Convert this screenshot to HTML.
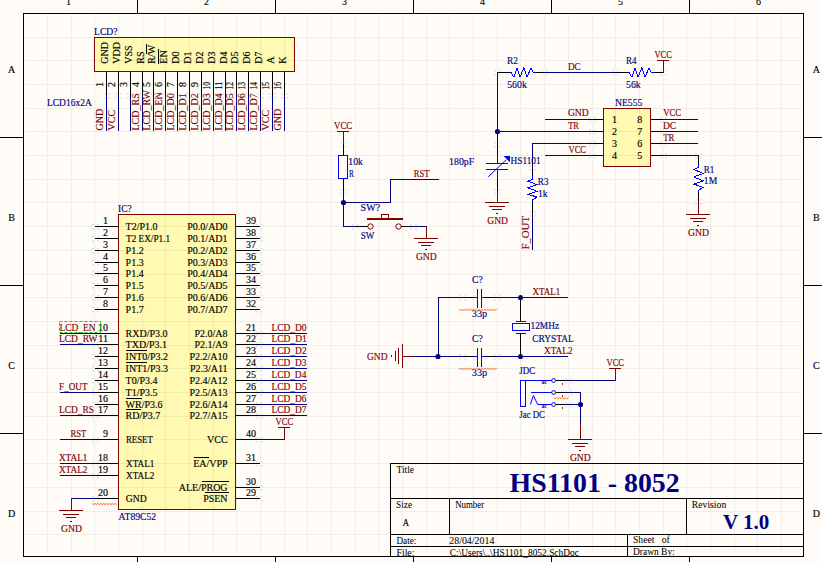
<!DOCTYPE html><html><head><meta charset="utf-8"><style>html,body{margin:0;padding:0;background:#FFFCF8;overflow:hidden}svg{display:block}text{font-family:'Liberation Serif', serif}</style></head><body>
<svg width="822" height="562" viewBox="0 0 822 562">
<rect width="822" height="562" fill="#FFFCF8"/>
<rect x="23.5" y="13.5" width="780" height="543" fill="none" stroke="#000000" stroke-width="1"/>
<rect x="137" y="0" width="1" height="14" fill="#000000"/>
<rect x="137" y="556" width="1" height="7" fill="#000000"/>
<rect x="275" y="0" width="1" height="14" fill="#000000"/>
<rect x="275" y="556" width="1" height="7" fill="#000000"/>
<rect x="413" y="0" width="1" height="14" fill="#000000"/>
<rect x="413" y="556" width="1" height="7" fill="#000000"/>
<rect x="551" y="0" width="1" height="14" fill="#000000"/>
<rect x="551" y="556" width="1" height="7" fill="#000000"/>
<rect x="689" y="0" width="1" height="14" fill="#000000"/>
<rect x="689" y="556" width="1" height="7" fill="#000000"/>
<rect x="0" y="137" width="24" height="1" fill="#000000"/>
<rect x="803" y="137" width="20" height="1" fill="#000000"/>
<rect x="0" y="285" width="24" height="1" fill="#000000"/>
<rect x="803" y="285" width="20" height="1" fill="#000000"/>
<rect x="0" y="433" width="24" height="1" fill="#000000"/>
<rect x="803" y="433" width="20" height="1" fill="#000000"/>
<text x="68.50" y="4.9" fill="#000000" stroke="#000000" stroke-width="0.15" font-size="10" text-anchor="middle">1</text>
<text x="206.50" y="4.9" fill="#000000" stroke="#000000" stroke-width="0.15" font-size="10" text-anchor="middle">2</text>
<text x="344.50" y="4.9" fill="#000000" stroke="#000000" stroke-width="0.15" font-size="10" text-anchor="middle">3</text>
<text x="482.50" y="4.9" fill="#000000" stroke="#000000" stroke-width="0.15" font-size="10" text-anchor="middle">4</text>
<text x="620.50" y="4.9" fill="#000000" stroke="#000000" stroke-width="0.15" font-size="10" text-anchor="middle">5</text>
<text x="758.50" y="4.9" fill="#000000" stroke="#000000" stroke-width="0.15" font-size="10" text-anchor="middle">6</text>
<text x="11.50" y="72.9" fill="#000000" stroke="#000000" stroke-width="0.15" font-size="10" text-anchor="middle">A</text>
<text x="816.40" y="72.9" fill="#000000" stroke="#000000" stroke-width="0.15" font-size="10" text-anchor="middle">A</text>
<text x="11.50" y="220.87" fill="#000000" stroke="#000000" stroke-width="0.15" font-size="10" text-anchor="middle">B</text>
<text x="816.40" y="220.87" fill="#000000" stroke="#000000" stroke-width="0.15" font-size="10" text-anchor="middle">B</text>
<text x="11.50" y="368.84000000000003" fill="#000000" stroke="#000000" stroke-width="0.15" font-size="10" text-anchor="middle">C</text>
<text x="816.40" y="368.84000000000003" fill="#000000" stroke="#000000" stroke-width="0.15" font-size="10" text-anchor="middle">C</text>
<text x="11.50" y="516.81" fill="#000000" stroke="#000000" stroke-width="0.15" font-size="10" text-anchor="middle">D</text>
<text x="816.40" y="516.81" fill="#000000" stroke="#000000" stroke-width="0.15" font-size="10" text-anchor="middle">D</text>
<rect x="94.5" y="37.5" width="200" height="34" fill="#FFF9B2" stroke="#800000" stroke-width="1"/>
<text x="94.02" y="34.8" fill="#000080" stroke="#000080" stroke-width="0.15" font-size="10" textLength="23.57" lengthAdjust="spacingAndGlyphs">LCD?</text>
<text x="46.93" y="105.7" fill="#000080" stroke="#000080" stroke-width="0.15" font-size="10" textLength="44.84" lengthAdjust="spacingAndGlyphs">LCD16x2A</text>
<rect x="106" y="72" width="1" height="24" fill="#000000"/>
<rect x="106" y="96" width="1" height="35" fill="#000080"/>
<text transform="translate(107.9 63.7) rotate(-90)" fill="#000000" stroke="#000000" stroke-width="0.15" font-size="10">GND</text>
<text transform="translate(103.0 84.6) rotate(-90)" fill="#000000" stroke="#000000" stroke-width="0.15" font-size="10" text-anchor="middle">1</text>
<text transform="translate(103.0 130.5) rotate(-90)" fill="#800000" stroke="#800000" stroke-width="0.15" font-size="10">GND</text>
<rect x="118" y="72" width="1" height="24" fill="#000000"/>
<rect x="118" y="96" width="1" height="35" fill="#000080"/>
<text transform="translate(119.9 63.7) rotate(-90)" fill="#000000" stroke="#000000" stroke-width="0.15" font-size="10">VDD</text>
<text transform="translate(115.0 84.6) rotate(-90)" fill="#000000" stroke="#000000" stroke-width="0.15" font-size="10" text-anchor="middle">2</text>
<text transform="translate(115.0 130.5) rotate(-90)" fill="#800000" stroke="#800000" stroke-width="0.15" font-size="10">VCC</text>
<rect x="130" y="72" width="1" height="24" fill="#000000"/>
<rect x="130" y="96" width="1" height="35" fill="#000080"/>
<text transform="translate(131.9 63.7) rotate(-90)" fill="#000000" stroke="#000000" stroke-width="0.15" font-size="10">VSS</text>
<text transform="translate(127.0 84.6) rotate(-90)" fill="#000000" stroke="#000000" stroke-width="0.15" font-size="10" text-anchor="middle">3</text>
<rect x="142" y="72" width="1" height="24" fill="#000000"/>
<rect x="142" y="96" width="1" height="35" fill="#000080"/>
<text transform="translate(143.9 63.7) rotate(-90)" fill="#000000" stroke="#000000" stroke-width="0.15" font-size="10">RS</text>
<text transform="translate(139.0 84.6) rotate(-90)" fill="#000000" stroke="#000000" stroke-width="0.15" font-size="10" text-anchor="middle">4</text>
<text transform="translate(139.0 130.5) rotate(-90)" fill="#800000" stroke="#800000" stroke-width="0.15" font-size="10">LCD_RS</text>
<rect x="153" y="72" width="1" height="24" fill="#000000"/>
<rect x="153" y="96" width="1" height="35" fill="#000080"/>
<text transform="translate(154.9 63.7) rotate(-90)" fill="#000000" stroke="#000000" stroke-width="0.15" font-size="10">R/W</text>
<text transform="translate(150.0 84.6) rotate(-90)" fill="#000000" stroke="#000000" stroke-width="0.15" font-size="10" text-anchor="middle">5</text>
<text transform="translate(150.0 130.5) rotate(-90)" fill="#800000" stroke="#800000" stroke-width="0.15" font-size="10">LCD_RW</text>
<rect x="165" y="72" width="1" height="24" fill="#000000"/>
<rect x="165" y="96" width="1" height="35" fill="#000080"/>
<text transform="translate(166.9 63.7) rotate(-90)" fill="#000000" stroke="#000000" stroke-width="0.15" font-size="10">EN</text>
<text transform="translate(162.0 84.6) rotate(-90)" fill="#000000" stroke="#000000" stroke-width="0.15" font-size="10" text-anchor="middle">6</text>
<text transform="translate(162.0 130.5) rotate(-90)" fill="#800000" stroke="#800000" stroke-width="0.15" font-size="10">LCD_EN</text>
<rect x="177" y="72" width="1" height="24" fill="#000000"/>
<rect x="177" y="96" width="1" height="35" fill="#000080"/>
<text transform="translate(178.9 63.7) rotate(-90)" fill="#000000" stroke="#000000" stroke-width="0.15" font-size="10">D0</text>
<text transform="translate(174.0 84.6) rotate(-90)" fill="#000000" stroke="#000000" stroke-width="0.15" font-size="10" text-anchor="middle">7</text>
<text transform="translate(174.0 130.5) rotate(-90)" fill="#800000" stroke="#800000" stroke-width="0.15" font-size="10">LCD_D0</text>
<rect x="189" y="72" width="1" height="24" fill="#000000"/>
<rect x="189" y="96" width="1" height="35" fill="#000080"/>
<text transform="translate(190.9 63.7) rotate(-90)" fill="#000000" stroke="#000000" stroke-width="0.15" font-size="10">D1</text>
<text transform="translate(186.0 84.6) rotate(-90)" fill="#000000" stroke="#000000" stroke-width="0.15" font-size="10" text-anchor="middle">8</text>
<text transform="translate(186.0 130.5) rotate(-90)" fill="#800000" stroke="#800000" stroke-width="0.15" font-size="10">LCD_D1</text>
<rect x="201" y="72" width="1" height="24" fill="#000000"/>
<rect x="201" y="96" width="1" height="35" fill="#000080"/>
<text transform="translate(202.9 63.7) rotate(-90)" fill="#000000" stroke="#000000" stroke-width="0.15" font-size="10">D2</text>
<text transform="translate(198.0 84.6) rotate(-90)" fill="#000000" stroke="#000000" stroke-width="0.15" font-size="10" text-anchor="middle">9</text>
<text transform="translate(198.0 130.5) rotate(-90)" fill="#800000" stroke="#800000" stroke-width="0.15" font-size="10">LCD_D2</text>
<rect x="213" y="72" width="1" height="24" fill="#000000"/>
<rect x="213" y="96" width="1" height="35" fill="#000080"/>
<text transform="translate(214.9 63.7) rotate(-90)" fill="#000000" stroke="#000000" stroke-width="0.15" font-size="10">D3</text>
<text transform="translate(210.0 85.7) rotate(-90)" fill="#000000" stroke="#000000" stroke-width="0.15" font-size="10" text-anchor="middle" textLength="7.6" lengthAdjust="spacingAndGlyphs">10</text>
<text transform="translate(210.0 130.5) rotate(-90)" fill="#800000" stroke="#800000" stroke-width="0.15" font-size="10">LCD_D3</text>
<rect x="225" y="72" width="1" height="24" fill="#000000"/>
<rect x="225" y="96" width="1" height="35" fill="#000080"/>
<text transform="translate(226.9 63.7) rotate(-90)" fill="#000000" stroke="#000000" stroke-width="0.15" font-size="10">D4</text>
<text transform="translate(222.0 85.7) rotate(-90)" fill="#000000" stroke="#000000" stroke-width="0.15" font-size="10" text-anchor="middle" textLength="7.6" lengthAdjust="spacingAndGlyphs">11</text>
<text transform="translate(222.0 130.5) rotate(-90)" fill="#800000" stroke="#800000" stroke-width="0.15" font-size="10">LCD_D4</text>
<rect x="236" y="72" width="1" height="24" fill="#000000"/>
<rect x="236" y="96" width="1" height="35" fill="#000080"/>
<text transform="translate(237.9 63.7) rotate(-90)" fill="#000000" stroke="#000000" stroke-width="0.15" font-size="10">D5</text>
<text transform="translate(233.0 85.7) rotate(-90)" fill="#000000" stroke="#000000" stroke-width="0.15" font-size="10" text-anchor="middle" textLength="7.6" lengthAdjust="spacingAndGlyphs">12</text>
<text transform="translate(233.0 130.5) rotate(-90)" fill="#800000" stroke="#800000" stroke-width="0.15" font-size="10">LCD_D5</text>
<rect x="248" y="72" width="1" height="24" fill="#000000"/>
<rect x="248" y="96" width="1" height="35" fill="#000080"/>
<text transform="translate(249.9 63.7) rotate(-90)" fill="#000000" stroke="#000000" stroke-width="0.15" font-size="10">D6</text>
<text transform="translate(245.0 85.7) rotate(-90)" fill="#000000" stroke="#000000" stroke-width="0.15" font-size="10" text-anchor="middle" textLength="7.6" lengthAdjust="spacingAndGlyphs">13</text>
<text transform="translate(245.0 130.5) rotate(-90)" fill="#800000" stroke="#800000" stroke-width="0.15" font-size="10">LCD_D6</text>
<rect x="260" y="72" width="1" height="24" fill="#000000"/>
<rect x="260" y="96" width="1" height="35" fill="#000080"/>
<text transform="translate(261.9 63.7) rotate(-90)" fill="#000000" stroke="#000000" stroke-width="0.15" font-size="10">D7</text>
<text transform="translate(257.0 85.7) rotate(-90)" fill="#000000" stroke="#000000" stroke-width="0.15" font-size="10" text-anchor="middle" textLength="7.6" lengthAdjust="spacingAndGlyphs">14</text>
<text transform="translate(257.0 130.5) rotate(-90)" fill="#800000" stroke="#800000" stroke-width="0.15" font-size="10">LCD_D7</text>
<rect x="272" y="72" width="1" height="24" fill="#000000"/>
<rect x="272" y="96" width="1" height="35" fill="#000080"/>
<text transform="translate(273.9 63.7) rotate(-90)" fill="#000000" stroke="#000000" stroke-width="0.15" font-size="10">A</text>
<text transform="translate(269.0 85.7) rotate(-90)" fill="#000000" stroke="#000000" stroke-width="0.15" font-size="10" text-anchor="middle" textLength="7.6" lengthAdjust="spacingAndGlyphs">15</text>
<text transform="translate(269.0 130.5) rotate(-90)" fill="#800000" stroke="#800000" stroke-width="0.15" font-size="10">VCC</text>
<rect x="284" y="72" width="1" height="24" fill="#000000"/>
<rect x="284" y="96" width="1" height="35" fill="#000080"/>
<text transform="translate(285.9 63.7) rotate(-90)" fill="#000000" stroke="#000000" stroke-width="0.15" font-size="10">K</text>
<text transform="translate(281.0 85.7) rotate(-90)" fill="#000000" stroke="#000000" stroke-width="0.15" font-size="10" text-anchor="middle" textLength="7.6" lengthAdjust="spacingAndGlyphs">16</text>
<text transform="translate(281.0 130.5) rotate(-90)" fill="#800000" stroke="#800000" stroke-width="0.15" font-size="10">GND</text>
<rect x="146" y="44" width="1" height="10" fill="#000000"/>
<rect x="158" y="49" width="1" height="15" fill="#000000"/>
<rect x="118.5" y="214.5" width="117" height="295" fill="#FFF9B2" stroke="#800000" stroke-width="1"/>
<text x="118.06" y="211.9" fill="#000080" stroke="#000080" stroke-width="0.15" font-size="10" textLength="13.73" lengthAdjust="spacingAndGlyphs">IC?</text>
<text x="118.61" y="519.8" fill="#000080" stroke="#000080" stroke-width="0.15" font-size="10" textLength="37.61" lengthAdjust="spacingAndGlyphs">AT89C52</text>
<rect x="95" y="226" width="24" height="1" fill="#000000"/>
<text x="125.60" y="229.7" fill="#000000" stroke="#000000" stroke-width="0.15" font-size="10">T2/P1.0</text>
<text x="108.00" y="223.7" fill="#000000" stroke="#000000" stroke-width="0.15" font-size="10" text-anchor="end">1</text>
<rect x="95" y="238" width="24" height="1" fill="#000000"/>
<text x="126.03" y="241.7" fill="#000000" stroke="#000000" stroke-width="0.15" font-size="10" textLength="44.02" lengthAdjust="spacingAndGlyphs">T2 EX/P1.1</text>
<text x="108.00" y="235.7" fill="#000000" stroke="#000000" stroke-width="0.15" font-size="10" text-anchor="end">2</text>
<rect x="95" y="250" width="24" height="1" fill="#000000"/>
<text x="125.60" y="253.7" fill="#000000" stroke="#000000" stroke-width="0.15" font-size="10">P1.2</text>
<text x="108.00" y="247.7" fill="#000000" stroke="#000000" stroke-width="0.15" font-size="10" text-anchor="end">3</text>
<rect x="95" y="262" width="24" height="1" fill="#000000"/>
<text x="125.60" y="265.7" fill="#000000" stroke="#000000" stroke-width="0.15" font-size="10">P1.3</text>
<text x="108.00" y="259.7" fill="#000000" stroke="#000000" stroke-width="0.15" font-size="10" text-anchor="end">4</text>
<rect x="95" y="273" width="24" height="1" fill="#000000"/>
<text x="125.60" y="276.7" fill="#000000" stroke="#000000" stroke-width="0.15" font-size="10">P1.4</text>
<text x="108.00" y="270.7" fill="#000000" stroke="#000000" stroke-width="0.15" font-size="10" text-anchor="end">5</text>
<rect x="95" y="285" width="24" height="1" fill="#000000"/>
<text x="125.60" y="288.7" fill="#000000" stroke="#000000" stroke-width="0.15" font-size="10">P1.5</text>
<text x="108.00" y="282.7" fill="#000000" stroke="#000000" stroke-width="0.15" font-size="10" text-anchor="end">6</text>
<rect x="95" y="297" width="24" height="1" fill="#000000"/>
<text x="125.60" y="300.7" fill="#000000" stroke="#000000" stroke-width="0.15" font-size="10">P1.6</text>
<text x="108.00" y="294.7" fill="#000000" stroke="#000000" stroke-width="0.15" font-size="10" text-anchor="end">7</text>
<rect x="95" y="309" width="24" height="1" fill="#000000"/>
<text x="125.60" y="312.7" fill="#000000" stroke="#000000" stroke-width="0.15" font-size="10">P1.7</text>
<text x="108.00" y="306.7" fill="#000000" stroke="#000000" stroke-width="0.15" font-size="10" text-anchor="end">8</text>
<rect x="95" y="333" width="24" height="1" fill="#000000"/>
<text x="125.60" y="336.7" fill="#000000" stroke="#000000" stroke-width="0.15" font-size="10">RXD/P3.0</text>
<text x="108.00" y="330.7" fill="#000000" stroke="#000000" stroke-width="0.15" font-size="10" text-anchor="end">10</text>
<rect x="95" y="344" width="24" height="1" fill="#000000"/>
<text x="125.60" y="347.7" fill="#000000" stroke="#000000" stroke-width="0.15" font-size="10">TXD/P3.1</text>
<text x="108.00" y="341.7" fill="#000000" stroke="#000000" stroke-width="0.15" font-size="10" text-anchor="end">11</text>
<rect x="95" y="356" width="24" height="1" fill="#000000"/>
<text x="125.60" y="359.7" fill="#000000" stroke="#000000" stroke-width="0.15" font-size="10">INT0/P3.2</text>
<text x="108.00" y="353.7" fill="#000000" stroke="#000000" stroke-width="0.15" font-size="10" text-anchor="end">12</text>
<rect x="95" y="368" width="24" height="1" fill="#000000"/>
<text x="125.60" y="371.7" fill="#000000" stroke="#000000" stroke-width="0.15" font-size="10">INT1/P3.3</text>
<text x="108.00" y="365.7" fill="#000000" stroke="#000000" stroke-width="0.15" font-size="10" text-anchor="end">13</text>
<rect x="95" y="380" width="24" height="1" fill="#000000"/>
<text x="125.60" y="383.7" fill="#000000" stroke="#000000" stroke-width="0.15" font-size="10">T0/P3.4</text>
<text x="108.00" y="377.7" fill="#000000" stroke="#000000" stroke-width="0.15" font-size="10" text-anchor="end">14</text>
<rect x="95" y="392" width="24" height="1" fill="#000000"/>
<text x="125.60" y="395.7" fill="#000000" stroke="#000000" stroke-width="0.15" font-size="10">T1/P3.5</text>
<text x="108.00" y="389.7" fill="#000000" stroke="#000000" stroke-width="0.15" font-size="10" text-anchor="end">15</text>
<rect x="95" y="404" width="24" height="1" fill="#000000"/>
<text x="125.60" y="407.7" fill="#000000" stroke="#000000" stroke-width="0.15" font-size="10">WR/P3.6</text>
<text x="108.00" y="401.7" fill="#000000" stroke="#000000" stroke-width="0.15" font-size="10" text-anchor="end">16</text>
<rect x="95" y="415" width="24" height="1" fill="#000000"/>
<text x="125.60" y="418.7" fill="#000000" stroke="#000000" stroke-width="0.15" font-size="10">RD/P3.7</text>
<text x="108.00" y="412.7" fill="#000000" stroke="#000000" stroke-width="0.15" font-size="10" text-anchor="end">17</text>
<rect x="95" y="439" width="24" height="1" fill="#000000"/>
<text x="125.95" y="442.7" fill="#000000" stroke="#000000" stroke-width="0.15" font-size="10" textLength="26.80" lengthAdjust="spacingAndGlyphs">RESET</text>
<text x="108.00" y="436.7" fill="#000000" stroke="#000000" stroke-width="0.15" font-size="10" text-anchor="end">9</text>
<rect x="95" y="463" width="24" height="1" fill="#000000"/>
<text x="126.00" y="466.7" fill="#000000" stroke="#000000" stroke-width="0.15" font-size="10" textLength="28.44" lengthAdjust="spacingAndGlyphs">XTAL1</text>
<text x="108.00" y="460.7" fill="#000000" stroke="#000000" stroke-width="0.15" font-size="10" text-anchor="end">18</text>
<rect x="95" y="475" width="24" height="1" fill="#000000"/>
<text x="126.00" y="478.7" fill="#000000" stroke="#000000" stroke-width="0.15" font-size="10" textLength="28.39" lengthAdjust="spacingAndGlyphs">XTAL2</text>
<text x="108.00" y="472.7" fill="#000000" stroke="#000000" stroke-width="0.15" font-size="10" text-anchor="end">19</text>
<rect x="95" y="498" width="24" height="1" fill="#000000"/>
<text x="125.80" y="501.7" fill="#000000" stroke="#000000" stroke-width="0.15" font-size="10" textLength="20.88" lengthAdjust="spacingAndGlyphs">GND</text>
<text x="108.00" y="495.7" fill="#000000" stroke="#000000" stroke-width="0.15" font-size="10" text-anchor="end">20</text>
<rect x="236" y="226" width="24" height="1" fill="#000000"/>
<text x="227.60" y="229.7" fill="#000000" stroke="#000000" stroke-width="0.15" font-size="10" text-anchor="end">P0.0/AD0</text>
<text x="246.00" y="223.7" fill="#000000" stroke="#000000" stroke-width="0.15" font-size="10">39</text>
<rect x="236" y="238" width="24" height="1" fill="#000000"/>
<text x="227.60" y="241.7" fill="#000000" stroke="#000000" stroke-width="0.15" font-size="10" text-anchor="end">P0.1/AD1</text>
<text x="246.00" y="235.7" fill="#000000" stroke="#000000" stroke-width="0.15" font-size="10">38</text>
<rect x="236" y="250" width="24" height="1" fill="#000000"/>
<text x="227.60" y="253.7" fill="#000000" stroke="#000000" stroke-width="0.15" font-size="10" text-anchor="end">P0.2/AD2</text>
<text x="246.00" y="247.7" fill="#000000" stroke="#000000" stroke-width="0.15" font-size="10">37</text>
<rect x="236" y="262" width="24" height="1" fill="#000000"/>
<text x="227.60" y="265.7" fill="#000000" stroke="#000000" stroke-width="0.15" font-size="10" text-anchor="end">P0.3/AD3</text>
<text x="246.00" y="259.7" fill="#000000" stroke="#000000" stroke-width="0.15" font-size="10">36</text>
<rect x="236" y="273" width="24" height="1" fill="#000000"/>
<text x="227.60" y="276.7" fill="#000000" stroke="#000000" stroke-width="0.15" font-size="10" text-anchor="end">P0.4/AD4</text>
<text x="246.00" y="270.7" fill="#000000" stroke="#000000" stroke-width="0.15" font-size="10">35</text>
<rect x="236" y="285" width="24" height="1" fill="#000000"/>
<text x="227.60" y="288.7" fill="#000000" stroke="#000000" stroke-width="0.15" font-size="10" text-anchor="end">P0.5/AD5</text>
<text x="246.00" y="282.7" fill="#000000" stroke="#000000" stroke-width="0.15" font-size="10">34</text>
<rect x="236" y="297" width="24" height="1" fill="#000000"/>
<text x="227.60" y="300.7" fill="#000000" stroke="#000000" stroke-width="0.15" font-size="10" text-anchor="end">P0.6/AD6</text>
<text x="246.00" y="294.7" fill="#000000" stroke="#000000" stroke-width="0.15" font-size="10">33</text>
<rect x="236" y="309" width="24" height="1" fill="#000000"/>
<text x="227.60" y="312.7" fill="#000000" stroke="#000000" stroke-width="0.15" font-size="10" text-anchor="end">P0.7/AD7</text>
<text x="246.00" y="306.7" fill="#000000" stroke="#000000" stroke-width="0.15" font-size="10">32</text>
<rect x="236" y="333" width="24" height="1" fill="#000000"/>
<text x="227.60" y="336.7" fill="#000000" stroke="#000000" stroke-width="0.15" font-size="10" text-anchor="end">P2.0/A8</text>
<text x="246.00" y="330.7" fill="#000000" stroke="#000000" stroke-width="0.15" font-size="10">21</text>
<rect x="236" y="344" width="24" height="1" fill="#000000"/>
<text x="227.60" y="347.7" fill="#000000" stroke="#000000" stroke-width="0.15" font-size="10" text-anchor="end">P2.1/A9</text>
<text x="246.00" y="341.7" fill="#000000" stroke="#000000" stroke-width="0.15" font-size="10">22</text>
<rect x="236" y="356" width="24" height="1" fill="#000000"/>
<text x="227.60" y="359.7" fill="#000000" stroke="#000000" stroke-width="0.15" font-size="10" text-anchor="end">P2.2/A10</text>
<text x="246.00" y="353.7" fill="#000000" stroke="#000000" stroke-width="0.15" font-size="10">23</text>
<rect x="236" y="368" width="24" height="1" fill="#000000"/>
<text x="227.60" y="371.7" fill="#000000" stroke="#000000" stroke-width="0.15" font-size="10" text-anchor="end">P2.3/A11</text>
<text x="246.00" y="365.7" fill="#000000" stroke="#000000" stroke-width="0.15" font-size="10">24</text>
<rect x="236" y="380" width="24" height="1" fill="#000000"/>
<text x="227.60" y="383.7" fill="#000000" stroke="#000000" stroke-width="0.15" font-size="10" text-anchor="end">P2.4/A12</text>
<text x="246.00" y="377.7" fill="#000000" stroke="#000000" stroke-width="0.15" font-size="10">25</text>
<rect x="236" y="392" width="24" height="1" fill="#000000"/>
<text x="227.60" y="395.7" fill="#000000" stroke="#000000" stroke-width="0.15" font-size="10" text-anchor="end">P2.5/A13</text>
<text x="246.00" y="389.7" fill="#000000" stroke="#000000" stroke-width="0.15" font-size="10">26</text>
<rect x="236" y="404" width="24" height="1" fill="#000000"/>
<text x="227.60" y="407.7" fill="#000000" stroke="#000000" stroke-width="0.15" font-size="10" text-anchor="end">P2.6/A14</text>
<text x="246.00" y="401.7" fill="#000000" stroke="#000000" stroke-width="0.15" font-size="10">27</text>
<rect x="236" y="415" width="24" height="1" fill="#000000"/>
<text x="227.60" y="418.7" fill="#000000" stroke="#000000" stroke-width="0.15" font-size="10" text-anchor="end">P2.7/A15</text>
<text x="246.00" y="412.7" fill="#000000" stroke="#000000" stroke-width="0.15" font-size="10">28</text>
<rect x="236" y="439" width="24" height="1" fill="#000000"/>
<text x="227.60" y="442.7" fill="#000000" stroke="#000000" stroke-width="0.15" font-size="10" text-anchor="end">VCC</text>
<text x="246.00" y="436.7" fill="#000000" stroke="#000000" stroke-width="0.15" font-size="10">40</text>
<rect x="236" y="463" width="24" height="1" fill="#000000"/>
<text x="227.60" y="466.7" fill="#000000" stroke="#000000" stroke-width="0.15" font-size="10" text-anchor="end">EA/VPP</text>
<text x="246.00" y="460.7" fill="#000000" stroke="#000000" stroke-width="0.15" font-size="10">31</text>
<rect x="236" y="487" width="24" height="1" fill="#000000"/>
<text x="227.60" y="490.7" fill="#000000" stroke="#000000" stroke-width="0.15" font-size="10" text-anchor="end">ALE/PROG</text>
<text x="246.00" y="484.7" fill="#000000" stroke="#000000" stroke-width="0.15" font-size="10">30</text>
<rect x="236" y="498" width="24" height="1" fill="#000000"/>
<text x="227.60" y="501.7" fill="#000000" stroke="#000000" stroke-width="0.15" font-size="10" text-anchor="end">PSEN</text>
<text x="246.00" y="495.7" fill="#000000" stroke="#000000" stroke-width="0.15" font-size="10">29</text>
<rect x="126" y="350" width="21" height="1" fill="#000000"/>
<rect x="126" y="362" width="21" height="1" fill="#000000"/>
<rect x="126" y="398" width="16" height="1" fill="#000000"/>
<rect x="126" y="409" width="15" height="1" fill="#000000"/>
<rect x="194" y="457" width="15" height="1" fill="#000000"/>
<rect x="202" y="481" width="27" height="1" fill="#000000"/>
<rect x="205" y="492" width="24" height="1" fill="#000000"/>
<rect x="60" y="333" width="35" height="1" fill="#000080"/>
<text x="59.53" y="330.6" fill="#800000" stroke="#800000" stroke-width="0.15" font-size="10" textLength="36.09" lengthAdjust="spacingAndGlyphs">LCD_EN</text>
<rect x="60" y="344" width="35" height="1" fill="#000080"/>
<text x="59.03" y="341.6" fill="#800000" stroke="#800000" stroke-width="0.15" font-size="10" textLength="38.39" lengthAdjust="spacingAndGlyphs">LCD_RW</text>
<rect x="60" y="392" width="35" height="1" fill="#000080"/>
<text x="59.04" y="389.6" fill="#800000" stroke="#800000" stroke-width="0.15" font-size="10" textLength="28.52" lengthAdjust="spacingAndGlyphs">F_OUT</text>
<rect x="60" y="415" width="35" height="1" fill="#000080"/>
<text x="59.03" y="412.6" fill="#800000" stroke="#800000" stroke-width="0.15" font-size="10" textLength="35.06" lengthAdjust="spacingAndGlyphs">LCD_RS</text>
<rect x="60" y="439" width="35" height="1" fill="#000080"/>
<text x="70.45" y="436.6" fill="#800000" stroke="#800000" stroke-width="0.15" font-size="10" textLength="15.89" lengthAdjust="spacingAndGlyphs">RST</text>
<rect x="60" y="463" width="35" height="1" fill="#000080"/>
<text x="58.90" y="460.6" fill="#800000" stroke="#800000" stroke-width="0.15" font-size="10" textLength="28.54" lengthAdjust="spacingAndGlyphs">XTAL1</text>
<rect x="60" y="475" width="35" height="1" fill="#000080"/>
<text x="58.90" y="472.6" fill="#800000" stroke="#800000" stroke-width="0.15" font-size="10" textLength="28.49" lengthAdjust="spacingAndGlyphs">XTAL2</text>
<rect x="59.5" y="321.5" width="41" height="11" fill="none" stroke="#00E000" stroke-width="1" stroke-dasharray="3,2"/>
<rect x="71" y="498" width="24" height="1" fill="#000080"/>
<rect x="71" y="498" width="1" height="13" fill="#800000"/>
<rect x="59" y="510" width="24" height="1" fill="#800000"/>
<rect x="63" y="514" width="16" height="1" fill="#800000"/>
<rect x="66" y="517" width="10" height="1" fill="#800000"/>
<rect x="70" y="521" width="2" height="1" fill="#800000"/>
<text x="61.10" y="531.7" fill="#800000" stroke="#800000" stroke-width="0.15" font-size="10" textLength="20.99" lengthAdjust="spacingAndGlyphs">GND</text>
<polyline points="92.0,503.0 93.5,505.0 94.9,503.0 96.4,505.0 97.8,503.0 99.3,505.0 100.7,503.0 102.2,505.0 103.6,503.0 105.1,505.0 106.5,503.0 108.0,505.0 109.4,503.0 110.9,505.0 112.3,503.0 113.8,505.0 115.2,503.0 116.7,505.0" fill="none" stroke="#FF8040" stroke-width="0.95"/>
<rect x="260" y="333" width="47" height="1" fill="#000080"/>
<text x="271.43" y="330.8" fill="#800000" stroke="#800000" stroke-width="0.15" font-size="10" textLength="35.13" lengthAdjust="spacingAndGlyphs">LCD_D0</text>
<rect x="260" y="344" width="47" height="1" fill="#000080"/>
<text x="271.43" y="341.8" fill="#800000" stroke="#800000" stroke-width="0.15" font-size="10" textLength="35.34" lengthAdjust="spacingAndGlyphs">LCD_D1</text>
<rect x="260" y="356" width="47" height="1" fill="#000080"/>
<text x="271.43" y="353.8" fill="#800000" stroke="#800000" stroke-width="0.15" font-size="10" textLength="35.30" lengthAdjust="spacingAndGlyphs">LCD_D2</text>
<rect x="260" y="368" width="47" height="1" fill="#000080"/>
<text x="271.43" y="365.8" fill="#800000" stroke="#800000" stroke-width="0.15" font-size="10" textLength="35.14" lengthAdjust="spacingAndGlyphs">LCD_D3</text>
<rect x="260" y="380" width="47" height="1" fill="#000080"/>
<text x="271.43" y="377.8" fill="#800000" stroke="#800000" stroke-width="0.15" font-size="10" textLength="34.92" lengthAdjust="spacingAndGlyphs">LCD_D4</text>
<rect x="260" y="392" width="47" height="1" fill="#000080"/>
<text x="271.43" y="389.8" fill="#800000" stroke="#800000" stroke-width="0.15" font-size="10" textLength="35.14" lengthAdjust="spacingAndGlyphs">LCD_D5</text>
<rect x="260" y="404" width="47" height="1" fill="#000080"/>
<text x="271.43" y="401.8" fill="#800000" stroke="#800000" stroke-width="0.15" font-size="10" textLength="35.05" lengthAdjust="spacingAndGlyphs">LCD_D6</text>
<rect x="260" y="415" width="47" height="1" fill="#000080"/>
<text x="271.43" y="412.8" fill="#800000" stroke="#800000" stroke-width="0.15" font-size="10" textLength="35.04" lengthAdjust="spacingAndGlyphs">LCD_D7</text>
<rect x="260" y="439" width="25" height="1" fill="#000080"/>
<rect x="284" y="427" width="1" height="13" fill="#800000"/>
<rect x="278" y="427" width="12" height="1" fill="#800000"/>
<text x="275.60" y="424.5" fill="#800000" stroke="#800000" stroke-width="0.15" font-size="10" textLength="17.57" lengthAdjust="spacingAndGlyphs">VCC</text>
<rect x="343" y="131" width="1" height="14" fill="#800000"/>
<rect x="337" y="131" width="12" height="1" fill="#800000"/>
<text x="334.00" y="128.5" fill="#800000" stroke="#800000" stroke-width="0.15" font-size="10" textLength="18.19" lengthAdjust="spacingAndGlyphs">VCC</text>
<rect x="343" y="144" width="1" height="12" fill="#000000"/>
<rect x="338.5" y="155.5" width="9" height="23" fill="none" stroke="#0000FF" stroke-width="1"/>
<rect x="343" y="179" width="1" height="13" fill="#000000"/>
<rect x="343" y="191" width="1" height="36" fill="#000080"/>
<circle cx="343.5" cy="202.5" r="2.6" fill="#000080"/>
<rect x="343" y="202" width="48" height="1" fill="#000080"/>
<rect x="390" y="179" width="1" height="24" fill="#000080"/>
<rect x="390" y="179" width="49" height="1" fill="#000080"/>
<text x="413.85" y="176.5" fill="#800000" stroke="#800000" stroke-width="0.15" font-size="10" textLength="15.79" lengthAdjust="spacingAndGlyphs">RST</text>
<text x="348.35" y="164.8" fill="#000080" stroke="#000080" stroke-width="0.15" font-size="10" textLength="14.45" lengthAdjust="spacingAndGlyphs">10k</text>
<text x="349.09" y="176.9" fill="#000080" stroke="#000080" stroke-width="0.15" font-size="10" textLength="4.82" lengthAdjust="spacingAndGlyphs">R</text>
<rect x="343" y="226" width="13" height="1" fill="#000080"/>
<rect x="355" y="226" width="13" height="1" fill="#000000"/>
<circle cx="370.5" cy="226.5" r="2.7" fill="none" stroke="#800000" stroke-width="1"/>
<circle cx="398.5" cy="226.5" r="2.7" fill="none" stroke="#800000" stroke-width="1"/>
<rect x="401" y="226" width="13" height="1" fill="#000000"/>
<rect x="413" y="226" width="14" height="1" fill="#000080"/>
<rect x="426" y="226" width="1" height="13" fill="#800000"/>
<rect x="414" y="238" width="24" height="1" fill="#800000"/>
<rect x="418" y="242" width="16" height="1" fill="#800000"/>
<rect x="421" y="245" width="10" height="1" fill="#800000"/>
<rect x="425" y="249" width="2" height="1" fill="#800000"/>
<text x="415.90" y="259.7" fill="#800000" stroke="#800000" stroke-width="0.15" font-size="10" textLength="20.88" lengthAdjust="spacingAndGlyphs">GND</text>
<rect x="367" y="218" width="36" height="2" fill="#800000"/>
<rect x="381.5" y="214.5" width="7" height="4" fill="none" stroke="#800000" stroke-width="1"/>
<text x="360.63" y="210.7" fill="#000080" stroke="#000080" stroke-width="0.15" font-size="10" textLength="19.48" lengthAdjust="spacingAndGlyphs">SW?</text>
<text x="360.69" y="238.5" fill="#000080" stroke="#000080" stroke-width="0.15" font-size="10" textLength="13.63" lengthAdjust="spacingAndGlyphs">SW</text>
<rect x="497" y="72" width="13" height="1" fill="#000000"/>
<polyline points="509.5,72.5 511.0,72.5 514.0,77.2 517.0,67.8 520.0,77.2 523.9,67.8 527.0,77.2 531.0,67.8 533.2,72.5 536.5,72.5" fill="none" stroke="#0000FF" stroke-width="1" shape-rendering="crispEdges"/>
<rect x="536" y="72" width="9" height="1" fill="#000000"/>
<rect x="544" y="72" width="72" height="1" fill="#000080"/>
<rect x="615" y="72" width="13" height="1" fill="#000000"/>
<polyline points="627.5,72.5 629.0,72.5 632.0,77.2 635.0,67.8 638.0,77.2 641.9,67.8 645.0,77.2 649.0,67.8 651.2,72.5 654.5,72.5" fill="none" stroke="#0000FF" stroke-width="1" shape-rendering="crispEdges"/>
<rect x="654" y="72" width="10" height="1" fill="#000000"/>
<rect x="663" y="60" width="1" height="13" fill="#800000"/>
<rect x="657" y="60" width="12" height="1" fill="#800000"/>
<text x="654.40" y="57.5" fill="#800000" stroke="#800000" stroke-width="0.15" font-size="10" textLength="17.46" lengthAdjust="spacingAndGlyphs">VCC</text>
<text x="507.03" y="63.9" fill="#000080" stroke="#000080" stroke-width="0.15" font-size="10" textLength="10.88" lengthAdjust="spacingAndGlyphs">R2</text>
<text x="507.13" y="88.2" fill="#000080" stroke="#000080" stroke-width="0.15" font-size="10" textLength="19.67" lengthAdjust="spacingAndGlyphs">560k</text>
<text x="567.93" y="69.9" fill="#800000" stroke="#800000" stroke-width="0.15" font-size="10" textLength="12.88" lengthAdjust="spacingAndGlyphs">DC</text>
<text x="626.04" y="63.9" fill="#000080" stroke="#000080" stroke-width="0.15" font-size="10" textLength="10.50" lengthAdjust="spacingAndGlyphs">R4</text>
<text x="626.03" y="87.9" fill="#000080" stroke="#000080" stroke-width="0.15" font-size="10" textLength="14.77" lengthAdjust="spacingAndGlyphs">56k</text>
<rect x="497" y="73" width="1" height="72" fill="#000080"/>
<circle cx="497.5" cy="131.5" r="2.6" fill="#000080"/>
<rect x="603.5" y="108.5" width="47" height="58" fill="#FFF9B2" stroke="#800000" stroke-width="1"/>
<text x="615.02" y="105.6" fill="#000080" stroke="#000080" stroke-width="0.15" font-size="10" textLength="27.25" lengthAdjust="spacingAndGlyphs">NE555</text>
<rect x="592" y="119" width="12" height="1" fill="#000000"/>
<rect x="651" y="119" width="13" height="1" fill="#000000"/>
<text x="614.60" y="123.2" fill="#000000" stroke="#000000" stroke-width="0.15" font-size="10" text-anchor="middle">1</text>
<text x="639.70" y="123.2" fill="#000000" stroke="#000000" stroke-width="0.15" font-size="10" text-anchor="middle">8</text>
<rect x="592" y="131" width="12" height="1" fill="#000000"/>
<rect x="651" y="131" width="13" height="1" fill="#000000"/>
<text x="614.60" y="135.2" fill="#000000" stroke="#000000" stroke-width="0.15" font-size="10" text-anchor="middle">2</text>
<text x="639.70" y="135.2" fill="#000000" stroke="#000000" stroke-width="0.15" font-size="10" text-anchor="middle">7</text>
<rect x="592" y="143" width="12" height="1" fill="#000000"/>
<rect x="651" y="143" width="13" height="1" fill="#000000"/>
<text x="614.60" y="147.2" fill="#000000" stroke="#000000" stroke-width="0.15" font-size="10" text-anchor="middle">3</text>
<text x="639.70" y="147.2" fill="#000000" stroke="#000000" stroke-width="0.15" font-size="10" text-anchor="middle">6</text>
<rect x="592" y="155" width="12" height="1" fill="#000000"/>
<rect x="651" y="155" width="13" height="1" fill="#000000"/>
<text x="614.60" y="159.2" fill="#000000" stroke="#000000" stroke-width="0.15" font-size="10" text-anchor="middle">4</text>
<text x="639.70" y="159.2" fill="#000000" stroke="#000000" stroke-width="0.15" font-size="10" text-anchor="middle">5</text>
<rect x="545" y="119" width="48" height="1" fill="#000080"/>
<rect x="497" y="131" width="96" height="1" fill="#000080"/>
<rect x="532" y="143" width="61" height="1" fill="#000080"/>
<rect x="545" y="155" width="48" height="1" fill="#000080"/>
<text x="567.91" y="116.2" fill="#800000" stroke="#800000" stroke-width="0.15" font-size="10" textLength="20.78" lengthAdjust="spacingAndGlyphs">GND</text>
<text x="568.15" y="128.5" fill="#800000" stroke="#800000" stroke-width="0.15" font-size="10" textLength="10.56" lengthAdjust="spacingAndGlyphs">TR</text>
<text x="568.50" y="152.5" fill="#800000" stroke="#800000" stroke-width="0.15" font-size="10" textLength="17.57" lengthAdjust="spacingAndGlyphs">VCC</text>
<rect x="663" y="119" width="35" height="1" fill="#000080"/>
<rect x="663" y="131" width="35" height="1" fill="#000080"/>
<rect x="663" y="143" width="35" height="1" fill="#000080"/>
<rect x="663" y="155" width="36" height="1" fill="#000080"/>
<text x="663.20" y="116.4" fill="#800000" stroke="#800000" stroke-width="0.15" font-size="10" textLength="17.98" lengthAdjust="spacingAndGlyphs">VCC</text>
<text x="663.03" y="128.5" fill="#800000" stroke="#800000" stroke-width="0.15" font-size="10" textLength="13.20" lengthAdjust="spacingAndGlyphs">DC</text>
<text x="663.14" y="140.6" fill="#800000" stroke="#800000" stroke-width="0.15" font-size="10" textLength="11.07" lengthAdjust="spacingAndGlyphs">TR</text>
<rect x="698" y="155" width="1" height="10" fill="#000000"/>
<polyline points="698.5,164.0 698.5,167.3 693.8,169.5 703.2,173.4 693.8,177.0 703.2,180.8 693.8,184.1 703.2,187.3 698.5,190.2 698.5,192.0" fill="none" stroke="#0000FF" stroke-width="1" shape-rendering="crispEdges"/>
<rect x="698" y="192" width="1" height="10" fill="#000000"/>
<rect x="698" y="201" width="1" height="14" fill="#800000"/>
<rect x="686" y="214" width="24" height="1" fill="#800000"/>
<rect x="690" y="218" width="16" height="1" fill="#800000"/>
<rect x="693" y="221" width="10" height="1" fill="#800000"/>
<rect x="697" y="225" width="2" height="1" fill="#800000"/>
<text x="687.90" y="235.7" fill="#800000" stroke="#800000" stroke-width="0.15" font-size="10" textLength="21.09" lengthAdjust="spacingAndGlyphs">GND</text>
<text x="703.64" y="172.7" fill="#000080" stroke="#000080" stroke-width="0.15" font-size="10" textLength="10.61" lengthAdjust="spacingAndGlyphs">R1</text>
<text x="703.86" y="184.4" fill="#000080" stroke="#000080" stroke-width="0.15" font-size="10" textLength="13.32" lengthAdjust="spacingAndGlyphs">1M</text>
<rect x="497" y="144" width="1" height="12" fill="#000000"/>
<rect x="497" y="155" width="1" height="9" fill="#0000FF"/>
<rect x="486" y="163" width="22" height="1" fill="#0000FF"/>
<rect x="486" y="169" width="22" height="1" fill="#0000FF"/>
<rect x="497" y="169" width="1" height="11" fill="#0000FF"/>
<rect x="497" y="179" width="1" height="13" fill="#000000"/>
<rect x="497" y="191" width="1" height="12" fill="#800000"/>
<rect x="485" y="202" width="24" height="1" fill="#800000"/>
<rect x="489" y="206" width="16" height="1" fill="#800000"/>
<rect x="492" y="209" width="10" height="1" fill="#800000"/>
<rect x="496" y="213" width="2" height="1" fill="#800000"/>
<text x="487.31" y="223.6" fill="#800000" stroke="#800000" stroke-width="0.15" font-size="10" textLength="20.67" lengthAdjust="spacingAndGlyphs">GND</text>
<line x1="488.2" y1="176.8" x2="506.3" y2="159.7" stroke="#0000FF" stroke-width="1"/>
<polygon points="503.6,156 510,156 510,162.3" fill="#0000FF"/>
<text x="510.54" y="163.8" fill="#000080" stroke="#000080" stroke-width="0.15" font-size="10" textLength="30.12" lengthAdjust="spacingAndGlyphs">HS1101</text>
<text x="449.03" y="164.8" fill="#000080" stroke="#000080" stroke-width="0.15" font-size="10" textLength="25.22" lengthAdjust="spacingAndGlyphs">180pF</text>
<rect x="532" y="143" width="1" height="25" fill="#000080"/>
<rect x="532" y="167" width="1" height="10" fill="#000000"/>
<polyline points="532.5,176.3 532.5,179.3 527.8,181.2 537.2,184.7 527.8,187.9 537.2,191.3 527.8,194.3 537.2,197.1 532.5,199.7 532.5,201.3" fill="none" stroke="#0000FF" stroke-width="1" shape-rendering="crispEdges"/>
<rect x="532" y="201" width="1" height="13" fill="#000000"/>
<rect x="532" y="214" width="1" height="36" fill="#000080"/>
<text x="537.84" y="184.8" fill="#000080" stroke="#000080" stroke-width="0.15" font-size="10" textLength="10.72" lengthAdjust="spacingAndGlyphs">R3</text>
<text x="537.94" y="196.9" fill="#000080" stroke="#000080" stroke-width="0.15" font-size="10" textLength="9.76" lengthAdjust="spacingAndGlyphs">1k</text>
<text transform="translate(529.2 249.6) rotate(-90)" fill="#800000" stroke="#800000" stroke-width="0.15" font-size="10" textLength="33.6" lengthAdjust="spacingAndGlyphs">F_OUT</text>
<rect x="402" y="356" width="12" height="1" fill="#800000"/>
<rect x="402" y="344" width="1" height="24" fill="#800000"/>
<rect x="398" y="348" width="1" height="16" fill="#800000"/>
<rect x="395" y="351" width="1" height="10" fill="#800000"/>
<rect x="391" y="355" width="1" height="2" fill="#800000"/>
<text x="367.01" y="359.6" fill="#800000" stroke="#800000" stroke-width="0.15" font-size="10" textLength="20.47" lengthAdjust="spacingAndGlyphs">GND</text>
<rect x="414" y="356" width="49" height="1" fill="#000080"/>
<rect x="438" y="297" width="1" height="60" fill="#000080"/>
<circle cx="438" cy="356.5" r="2.6" fill="#000080"/>
<rect x="438" y="297" width="25" height="1" fill="#000080"/>
<rect x="462" y="297" width="12" height="1" fill="#000000"/>
<rect x="473" y="297" width="5" height="1" fill="#0000FF"/>
<rect x="477" y="289" width="1" height="19" fill="#0000FF"/>
<rect x="481" y="289" width="1" height="19" fill="#0000FF"/>
<rect x="481" y="297" width="5" height="1" fill="#0000FF"/>
<rect x="485" y="297" width="13" height="1" fill="#000000"/>
<rect x="497" y="297" width="71" height="1" fill="#000080"/>
<text x="471.90" y="283.1" fill="#000080" stroke="#000080" stroke-width="0.15" font-size="10" textLength="10.80" lengthAdjust="spacingAndGlyphs">C?</text>
<text x="471.81" y="317.2" fill="#000080" stroke="#000080" stroke-width="0.15" font-size="10" textLength="15.29" lengthAdjust="spacingAndGlyphs">33p</text>
<polyline points="459.0,308.9 460.4,310.9 461.9,308.9 463.3,310.9 464.8,308.9 466.2,310.9 467.7,308.9 469.1,310.9 470.6,308.9 472.0,310.9 473.5,308.9 474.9,310.9 476.4,308.9 477.8,310.9 479.3,308.9 480.7,310.9 482.2,308.9 483.6,310.9 485.1,308.9 486.5,310.9 488.0,308.9 489.4,310.9 490.9,308.9 492.3,310.9 493.8,308.9 495.2,310.9 496.7,308.9" fill="none" stroke="#FF8040" stroke-width="0.95"/>
<rect x="462" y="356" width="12" height="1" fill="#000000"/>
<rect x="473" y="356" width="5" height="1" fill="#0000FF"/>
<rect x="477" y="348" width="1" height="19" fill="#0000FF"/>
<rect x="481" y="348" width="1" height="19" fill="#0000FF"/>
<rect x="481" y="356" width="5" height="1" fill="#0000FF"/>
<rect x="485" y="356" width="13" height="1" fill="#000000"/>
<rect x="497" y="356" width="71" height="1" fill="#000080"/>
<text x="471.90" y="342.1" fill="#000080" stroke="#000080" stroke-width="0.15" font-size="10" textLength="10.80" lengthAdjust="spacingAndGlyphs">C?</text>
<text x="471.81" y="376.2" fill="#000080" stroke="#000080" stroke-width="0.15" font-size="10" textLength="15.29" lengthAdjust="spacingAndGlyphs">33p</text>
<polyline points="459.0,367.9 460.4,369.9 461.9,367.9 463.3,369.9 464.8,367.9 466.2,369.9 467.7,367.9 469.1,369.9 470.6,367.9 472.0,369.9 473.5,367.9 474.9,369.9 476.4,367.9 477.8,369.9 479.3,367.9 480.7,369.9 482.2,367.9 483.6,369.9 485.1,367.9 486.5,369.9 488.0,367.9 489.4,369.9 490.9,367.9 492.3,369.9 493.8,367.9 495.2,369.9 496.7,367.9" fill="none" stroke="#FF8040" stroke-width="0.95"/>
<circle cx="520.5" cy="297.5" r="2.6" fill="#000080"/>
<circle cx="520.5" cy="356.5" r="2.6" fill="#000080"/>
<rect x="520" y="297" width="1" height="25" fill="#000000"/>
<rect x="516" y="321" width="10" height="1" fill="#0000FF"/>
<rect x="512.5" y="323.5" width="17" height="7" fill="none" stroke="#0000FF" stroke-width="1"/>
<rect x="516" y="333" width="10" height="1" fill="#0000FF"/>
<rect x="520" y="333" width="1" height="24" fill="#000000"/>
<text x="530.48" y="328.6" fill="#000080" stroke="#000080" stroke-width="0.15" font-size="10" textLength="28.58" lengthAdjust="spacingAndGlyphs">12MHz</text>
<text x="532.23" y="341.8" fill="#000080" stroke="#000080" stroke-width="0.15" font-size="10" textLength="41.42" lengthAdjust="spacingAndGlyphs">CRYSTAL</text>
<text x="543.90" y="353.6" fill="#800000" stroke="#800000" stroke-width="0.15" font-size="10" textLength="28.80" lengthAdjust="spacingAndGlyphs">XTAL2</text>
<text x="532.51" y="294.7" fill="#800000" stroke="#800000" stroke-width="0.15" font-size="10" textLength="27.72" lengthAdjust="spacingAndGlyphs">XTAL1</text>
<rect x="520.5" y="380.5" width="5" height="26" fill="none" stroke="#0000FF" stroke-width="1"/>
<rect x="520" y="380" width="32" height="1" fill="#0000FF"/>
<rect x="531" y="392" width="21" height="1" fill="#0000FF"/>
<polyline points="530.4,404.5 533.4,395.5 537.7,404.5 551.7,404.5" fill="none" stroke="#0000FF" stroke-width="1"/>
<circle cx="553.6" cy="380.5" r="1.9" fill="#FFFCF8" stroke="#0000FF" stroke-width="1"/>
<rect x="556" y="380" width="13" height="1" fill="#000000"/>
<rect x="562" y="383" width="1" height="2" fill="#800000" opacity="0.8"/>
<circle cx="553.6" cy="392.5" r="1.9" fill="#FFFCF8" stroke="#0000FF" stroke-width="1"/>
<rect x="556" y="392" width="13" height="1" fill="#000000"/>
<rect x="562" y="395" width="1" height="2" fill="#800000" opacity="0.8"/>
<circle cx="553.6" cy="404.5" r="1.9" fill="#FFFCF8" stroke="#0000FF" stroke-width="1"/>
<rect x="556" y="404" width="13" height="1" fill="#000000"/>
<rect x="562" y="407" width="1" height="2" fill="#800000" opacity="0.8"/>
<text x="541.5" y="383.5" fill="#000080" font-size="5.5" font-weight="bold">ac</text>
<text x="541.5" y="407.5" fill="#000080" font-size="5.5" font-weight="bold">ac</text>
<rect x="568" y="380" width="48" height="1" fill="#000080"/>
<rect x="615" y="368" width="1" height="13" fill="#800000"/>
<rect x="609" y="368" width="12" height="1" fill="#800000"/>
<text x="606.50" y="365.5" fill="#800000" stroke="#800000" stroke-width="0.15" font-size="10" textLength="17.46" lengthAdjust="spacingAndGlyphs">VCC</text>
<rect x="568" y="392" width="13" height="1" fill="#000080"/>
<rect x="568" y="404" width="13" height="1" fill="#000080"/>
<rect x="580" y="392" width="1" height="33" fill="#000080"/>
<circle cx="580.5" cy="404.5" r="2.6" fill="#000080"/>
<rect x="580" y="424" width="1" height="16" fill="#800000"/>
<rect x="568" y="439" width="24" height="1" fill="#800000"/>
<rect x="572" y="443" width="16" height="1" fill="#800000"/>
<rect x="575" y="446" width="10" height="1" fill="#800000"/>
<rect x="579" y="450" width="2" height="1" fill="#800000"/>
<text x="569.90" y="460.5" fill="#800000" stroke="#800000" stroke-width="0.15" font-size="10" textLength="20.88" lengthAdjust="spacingAndGlyphs">GND</text>
<polyline points="553.8,397.2 555.2,399.2 556.7,397.2 558.2,399.2 559.6,397.2 561.1,399.2 562.5,397.2 564.0,399.2 565.4,397.2 566.9,399.2 568.3,397.2" fill="none" stroke="#FF8040" stroke-width="0.95"/>
<text x="519.31" y="373.5" fill="#000080" stroke="#000080" stroke-width="0.15" font-size="10" textLength="16.09" lengthAdjust="spacingAndGlyphs">JDC</text>
<text x="519.32" y="418.3" fill="#000080" stroke="#000080" stroke-width="0.15" font-size="10" textLength="25.67" lengthAdjust="spacingAndGlyphs">Jac DC</text>
<rect x="390.5" y="463.5" width="413" height="93" fill="none" stroke="#000000" stroke-width="1"/>
<rect x="390" y="498" width="414" height="1" fill="#000000"/>
<rect x="390" y="534" width="414" height="1" fill="#000000"/>
<rect x="390" y="546" width="414" height="1" fill="#000000"/>
<rect x="449" y="498" width="1" height="37" fill="#000000"/>
<rect x="686" y="498" width="1" height="37" fill="#000000"/>
<rect x="627" y="534" width="1" height="23" fill="#000000"/>
<text x="396.53" y="472.5" fill="#000000" stroke="#000000" stroke-width="0.05" font-size="10" textLength="17.49" lengthAdjust="spacingAndGlyphs">Title</text>
<text x="396.08" y="508" fill="#000000" stroke="#000000" stroke-width="0.05" font-size="10" textLength="15.94" lengthAdjust="spacingAndGlyphs">Size</text>
<text x="402.72" y="525.5" fill="#000000" stroke="#000000" stroke-width="0.2" font-size="10" textLength="6.25" lengthAdjust="spacingAndGlyphs">A</text>
<text x="455.14" y="508" fill="#000000" stroke="#000000" stroke-width="0.05" font-size="10" textLength="29.03" lengthAdjust="spacingAndGlyphs">Number</text>
<text x="396.44" y="543.6" fill="#000000" stroke="#000000" stroke-width="0.05" font-size="10" textLength="19.91" lengthAdjust="spacingAndGlyphs">Date:</text>
<text x="449.27" y="543.6" fill="#000000" stroke="#000000" stroke-width="0.05" font-size="10" textLength="45.09" lengthAdjust="spacingAndGlyphs">28/04/2014</text>
<text x="396.42" y="555.6" fill="#000000" stroke="#000000" stroke-width="0.05" font-size="10" textLength="18.08" lengthAdjust="spacingAndGlyphs">File:</text>
<text x="449.81" y="555.6" fill="#000000" stroke="#000000" stroke-width="0.05" font-size="10" textLength="129.17" lengthAdjust="spacingAndGlyphs">C:\Users\..\HS1101_8052.SchDoc</text>
<text x="633" y="543.2" fill="#000000" font-size="10" textLength="36.7" lengthAdjust="spacingAndGlyphs" xml:space="preserve">Sheet   of</text>
<text x="633.03" y="554.8" fill="#000000" stroke="#000000" stroke-width="0.05" font-size="10" textLength="41.74" lengthAdjust="spacingAndGlyphs">Drawn By:</text>
<text x="691.82" y="507.6" fill="#000000" stroke="#000000" stroke-width="0.05" font-size="10" textLength="34.43" lengthAdjust="spacingAndGlyphs">Revision</text>
<text x="722.97" y="528.6" fill="#000080" font-size="20" font-weight="bold" textLength="46.33" lengthAdjust="spacingAndGlyphs">V 1.0</text>
<text x="509.53" y="492.1" fill="#000080" font-size="27.5" font-weight="bold" textLength="170.16" lengthAdjust="spacingAndGlyphs">HS1101 - 8052</text>
<rect x="103" y="93" width="2" height="1.5" fill="#D5DFF2" opacity="0.8"/>
<rect x="103" y="97" width="2" height="1.5" fill="#D5DFF2" opacity="0.8"/>
<rect x="108" y="93" width="2" height="1.5" fill="#D5DFF2" opacity="0.8"/>
<rect x="108" y="97" width="2" height="1.5" fill="#D5DFF2" opacity="0.8"/>
<rect x="115" y="93" width="2" height="1.5" fill="#D5DFF2" opacity="0.8"/>
<rect x="115" y="97" width="2" height="1.5" fill="#D5DFF2" opacity="0.8"/>
<rect x="120" y="93" width="2" height="1.5" fill="#D5DFF2" opacity="0.8"/>
<rect x="120" y="97" width="2" height="1.5" fill="#D5DFF2" opacity="0.8"/>
<rect x="127" y="93" width="2" height="1.5" fill="#D5DFF2" opacity="0.8"/>
<rect x="127" y="97" width="2" height="1.5" fill="#D5DFF2" opacity="0.8"/>
<rect x="132" y="93" width="2" height="1.5" fill="#D5DFF2" opacity="0.8"/>
<rect x="132" y="97" width="2" height="1.5" fill="#D5DFF2" opacity="0.8"/>
<rect x="139" y="93" width="2" height="1.5" fill="#D5DFF2" opacity="0.8"/>
<rect x="139" y="97" width="2" height="1.5" fill="#D5DFF2" opacity="0.8"/>
<rect x="144" y="93" width="2" height="1.5" fill="#D5DFF2" opacity="0.8"/>
<rect x="144" y="97" width="2" height="1.5" fill="#D5DFF2" opacity="0.8"/>
<rect x="150" y="93" width="2" height="1.5" fill="#D5DFF2" opacity="0.8"/>
<rect x="150" y="97" width="2" height="1.5" fill="#D5DFF2" opacity="0.8"/>
<rect x="155" y="93" width="2" height="1.5" fill="#D5DFF2" opacity="0.8"/>
<rect x="155" y="97" width="2" height="1.5" fill="#D5DFF2" opacity="0.8"/>
<rect x="162" y="93" width="2" height="1.5" fill="#D5DFF2" opacity="0.8"/>
<rect x="162" y="97" width="2" height="1.5" fill="#D5DFF2" opacity="0.8"/>
<rect x="167" y="93" width="2" height="1.5" fill="#D5DFF2" opacity="0.8"/>
<rect x="167" y="97" width="2" height="1.5" fill="#D5DFF2" opacity="0.8"/>
<rect x="174" y="93" width="2" height="1.5" fill="#D5DFF2" opacity="0.8"/>
<rect x="174" y="97" width="2" height="1.5" fill="#D5DFF2" opacity="0.8"/>
<rect x="179" y="93" width="2" height="1.5" fill="#D5DFF2" opacity="0.8"/>
<rect x="179" y="97" width="2" height="1.5" fill="#D5DFF2" opacity="0.8"/>
<rect x="186" y="93" width="2" height="1.5" fill="#D5DFF2" opacity="0.8"/>
<rect x="186" y="97" width="2" height="1.5" fill="#D5DFF2" opacity="0.8"/>
<rect x="191" y="93" width="2" height="1.5" fill="#D5DFF2" opacity="0.8"/>
<rect x="191" y="97" width="2" height="1.5" fill="#D5DFF2" opacity="0.8"/>
<rect x="198" y="93" width="2" height="1.5" fill="#D5DFF2" opacity="0.8"/>
<rect x="198" y="97" width="2" height="1.5" fill="#D5DFF2" opacity="0.8"/>
<rect x="203" y="93" width="2" height="1.5" fill="#D5DFF2" opacity="0.8"/>
<rect x="203" y="97" width="2" height="1.5" fill="#D5DFF2" opacity="0.8"/>
<rect x="210" y="93" width="2" height="1.5" fill="#D5DFF2" opacity="0.8"/>
<rect x="210" y="97" width="2" height="1.5" fill="#D5DFF2" opacity="0.8"/>
<rect x="215" y="93" width="2" height="1.5" fill="#D5DFF2" opacity="0.8"/>
<rect x="215" y="97" width="2" height="1.5" fill="#D5DFF2" opacity="0.8"/>
<rect x="222" y="93" width="2" height="1.5" fill="#D5DFF2" opacity="0.8"/>
<rect x="222" y="97" width="2" height="1.5" fill="#D5DFF2" opacity="0.8"/>
<rect x="227" y="93" width="2" height="1.5" fill="#D5DFF2" opacity="0.8"/>
<rect x="227" y="97" width="2" height="1.5" fill="#D5DFF2" opacity="0.8"/>
<rect x="233" y="93" width="2" height="1.5" fill="#D5DFF2" opacity="0.8"/>
<rect x="233" y="97" width="2" height="1.5" fill="#D5DFF2" opacity="0.8"/>
<rect x="238" y="93" width="2" height="1.5" fill="#D5DFF2" opacity="0.8"/>
<rect x="238" y="97" width="2" height="1.5" fill="#D5DFF2" opacity="0.8"/>
<rect x="245" y="93" width="2" height="1.5" fill="#D5DFF2" opacity="0.8"/>
<rect x="245" y="97" width="2" height="1.5" fill="#D5DFF2" opacity="0.8"/>
<rect x="250" y="93" width="2" height="1.5" fill="#D5DFF2" opacity="0.8"/>
<rect x="250" y="97" width="2" height="1.5" fill="#D5DFF2" opacity="0.8"/>
<rect x="257" y="93" width="2" height="1.5" fill="#D5DFF2" opacity="0.8"/>
<rect x="257" y="97" width="2" height="1.5" fill="#D5DFF2" opacity="0.8"/>
<rect x="262" y="93" width="2" height="1.5" fill="#D5DFF2" opacity="0.8"/>
<rect x="262" y="97" width="2" height="1.5" fill="#D5DFF2" opacity="0.8"/>
<rect x="269" y="93" width="2" height="1.5" fill="#D5DFF2" opacity="0.8"/>
<rect x="269" y="97" width="2" height="1.5" fill="#D5DFF2" opacity="0.8"/>
<rect x="274" y="93" width="2" height="1.5" fill="#D5DFF2" opacity="0.8"/>
<rect x="274" y="97" width="2" height="1.5" fill="#D5DFF2" opacity="0.8"/>
<rect x="281" y="93" width="2" height="1.5" fill="#D5DFF2" opacity="0.8"/>
<rect x="281" y="97" width="2" height="1.5" fill="#D5DFF2" opacity="0.8"/>
<rect x="286" y="93" width="2" height="1.5" fill="#D5DFF2" opacity="0.8"/>
<rect x="286" y="97" width="2" height="1.5" fill="#D5DFF2" opacity="0.8"/>
<rect x="92" y="224" width="2" height="1.5" fill="#D5DFF2" opacity="0.8"/>
<rect x="92" y="228" width="2" height="1.5" fill="#D5DFF2" opacity="0.8"/>
<rect x="97" y="224" width="2" height="1.5" fill="#D5DFF2" opacity="0.8"/>
<rect x="97" y="228" width="2" height="1.5" fill="#D5DFF2" opacity="0.8"/>
<rect x="92" y="236" width="2" height="1.5" fill="#D5DFF2" opacity="0.8"/>
<rect x="92" y="240" width="2" height="1.5" fill="#D5DFF2" opacity="0.8"/>
<rect x="97" y="236" width="2" height="1.5" fill="#D5DFF2" opacity="0.8"/>
<rect x="97" y="240" width="2" height="1.5" fill="#D5DFF2" opacity="0.8"/>
<rect x="92" y="248" width="2" height="1.5" fill="#D5DFF2" opacity="0.8"/>
<rect x="92" y="252" width="2" height="1.5" fill="#D5DFF2" opacity="0.8"/>
<rect x="97" y="248" width="2" height="1.5" fill="#D5DFF2" opacity="0.8"/>
<rect x="97" y="252" width="2" height="1.5" fill="#D5DFF2" opacity="0.8"/>
<rect x="92" y="260" width="2" height="1.5" fill="#D5DFF2" opacity="0.8"/>
<rect x="92" y="264" width="2" height="1.5" fill="#D5DFF2" opacity="0.8"/>
<rect x="97" y="260" width="2" height="1.5" fill="#D5DFF2" opacity="0.8"/>
<rect x="97" y="264" width="2" height="1.5" fill="#D5DFF2" opacity="0.8"/>
<rect x="92" y="271" width="2" height="1.5" fill="#D5DFF2" opacity="0.8"/>
<rect x="92" y="275" width="2" height="1.5" fill="#D5DFF2" opacity="0.8"/>
<rect x="97" y="271" width="2" height="1.5" fill="#D5DFF2" opacity="0.8"/>
<rect x="97" y="275" width="2" height="1.5" fill="#D5DFF2" opacity="0.8"/>
<rect x="92" y="283" width="2" height="1.5" fill="#D5DFF2" opacity="0.8"/>
<rect x="92" y="287" width="2" height="1.5" fill="#D5DFF2" opacity="0.8"/>
<rect x="97" y="283" width="2" height="1.5" fill="#D5DFF2" opacity="0.8"/>
<rect x="97" y="287" width="2" height="1.5" fill="#D5DFF2" opacity="0.8"/>
<rect x="92" y="295" width="2" height="1.5" fill="#D5DFF2" opacity="0.8"/>
<rect x="92" y="299" width="2" height="1.5" fill="#D5DFF2" opacity="0.8"/>
<rect x="97" y="295" width="2" height="1.5" fill="#D5DFF2" opacity="0.8"/>
<rect x="97" y="299" width="2" height="1.5" fill="#D5DFF2" opacity="0.8"/>
<rect x="92" y="307" width="2" height="1.5" fill="#D5DFF2" opacity="0.8"/>
<rect x="92" y="311" width="2" height="1.5" fill="#D5DFF2" opacity="0.8"/>
<rect x="97" y="307" width="2" height="1.5" fill="#D5DFF2" opacity="0.8"/>
<rect x="97" y="311" width="2" height="1.5" fill="#D5DFF2" opacity="0.8"/>
<rect x="92" y="331" width="2" height="1.5" fill="#D5DFF2" opacity="0.8"/>
<rect x="92" y="335" width="2" height="1.5" fill="#D5DFF2" opacity="0.8"/>
<rect x="97" y="331" width="2" height="1.5" fill="#D5DFF2" opacity="0.8"/>
<rect x="97" y="335" width="2" height="1.5" fill="#D5DFF2" opacity="0.8"/>
<rect x="92" y="342" width="2" height="1.5" fill="#D5DFF2" opacity="0.8"/>
<rect x="92" y="346" width="2" height="1.5" fill="#D5DFF2" opacity="0.8"/>
<rect x="97" y="342" width="2" height="1.5" fill="#D5DFF2" opacity="0.8"/>
<rect x="97" y="346" width="2" height="1.5" fill="#D5DFF2" opacity="0.8"/>
<rect x="92" y="354" width="2" height="1.5" fill="#D5DFF2" opacity="0.8"/>
<rect x="92" y="358" width="2" height="1.5" fill="#D5DFF2" opacity="0.8"/>
<rect x="97" y="354" width="2" height="1.5" fill="#D5DFF2" opacity="0.8"/>
<rect x="97" y="358" width="2" height="1.5" fill="#D5DFF2" opacity="0.8"/>
<rect x="92" y="366" width="2" height="1.5" fill="#D5DFF2" opacity="0.8"/>
<rect x="92" y="370" width="2" height="1.5" fill="#D5DFF2" opacity="0.8"/>
<rect x="97" y="366" width="2" height="1.5" fill="#D5DFF2" opacity="0.8"/>
<rect x="97" y="370" width="2" height="1.5" fill="#D5DFF2" opacity="0.8"/>
<rect x="92" y="378" width="2" height="1.5" fill="#D5DFF2" opacity="0.8"/>
<rect x="92" y="382" width="2" height="1.5" fill="#D5DFF2" opacity="0.8"/>
<rect x="97" y="378" width="2" height="1.5" fill="#D5DFF2" opacity="0.8"/>
<rect x="97" y="382" width="2" height="1.5" fill="#D5DFF2" opacity="0.8"/>
<rect x="92" y="390" width="2" height="1.5" fill="#D5DFF2" opacity="0.8"/>
<rect x="92" y="394" width="2" height="1.5" fill="#D5DFF2" opacity="0.8"/>
<rect x="97" y="390" width="2" height="1.5" fill="#D5DFF2" opacity="0.8"/>
<rect x="97" y="394" width="2" height="1.5" fill="#D5DFF2" opacity="0.8"/>
<rect x="92" y="402" width="2" height="1.5" fill="#D5DFF2" opacity="0.8"/>
<rect x="92" y="406" width="2" height="1.5" fill="#D5DFF2" opacity="0.8"/>
<rect x="97" y="402" width="2" height="1.5" fill="#D5DFF2" opacity="0.8"/>
<rect x="97" y="406" width="2" height="1.5" fill="#D5DFF2" opacity="0.8"/>
<rect x="92" y="413" width="2" height="1.5" fill="#D5DFF2" opacity="0.8"/>
<rect x="92" y="417" width="2" height="1.5" fill="#D5DFF2" opacity="0.8"/>
<rect x="97" y="413" width="2" height="1.5" fill="#D5DFF2" opacity="0.8"/>
<rect x="97" y="417" width="2" height="1.5" fill="#D5DFF2" opacity="0.8"/>
<rect x="92" y="437" width="2" height="1.5" fill="#D5DFF2" opacity="0.8"/>
<rect x="92" y="441" width="2" height="1.5" fill="#D5DFF2" opacity="0.8"/>
<rect x="97" y="437" width="2" height="1.5" fill="#D5DFF2" opacity="0.8"/>
<rect x="97" y="441" width="2" height="1.5" fill="#D5DFF2" opacity="0.8"/>
<rect x="92" y="461" width="2" height="1.5" fill="#D5DFF2" opacity="0.8"/>
<rect x="92" y="465" width="2" height="1.5" fill="#D5DFF2" opacity="0.8"/>
<rect x="97" y="461" width="2" height="1.5" fill="#D5DFF2" opacity="0.8"/>
<rect x="97" y="465" width="2" height="1.5" fill="#D5DFF2" opacity="0.8"/>
<rect x="92" y="473" width="2" height="1.5" fill="#D5DFF2" opacity="0.8"/>
<rect x="92" y="477" width="2" height="1.5" fill="#D5DFF2" opacity="0.8"/>
<rect x="97" y="473" width="2" height="1.5" fill="#D5DFF2" opacity="0.8"/>
<rect x="97" y="477" width="2" height="1.5" fill="#D5DFF2" opacity="0.8"/>
<rect x="92" y="496" width="2" height="1.5" fill="#D5DFF2" opacity="0.8"/>
<rect x="92" y="500" width="2" height="1.5" fill="#D5DFF2" opacity="0.8"/>
<rect x="97" y="496" width="2" height="1.5" fill="#D5DFF2" opacity="0.8"/>
<rect x="97" y="500" width="2" height="1.5" fill="#D5DFF2" opacity="0.8"/>
<rect x="256" y="224" width="2" height="1.5" fill="#D5DFF2" opacity="0.8"/>
<rect x="256" y="228" width="2" height="1.5" fill="#D5DFF2" opacity="0.8"/>
<rect x="261" y="224" width="2" height="1.5" fill="#D5DFF2" opacity="0.8"/>
<rect x="261" y="228" width="2" height="1.5" fill="#D5DFF2" opacity="0.8"/>
<rect x="256" y="236" width="2" height="1.5" fill="#D5DFF2" opacity="0.8"/>
<rect x="256" y="240" width="2" height="1.5" fill="#D5DFF2" opacity="0.8"/>
<rect x="261" y="236" width="2" height="1.5" fill="#D5DFF2" opacity="0.8"/>
<rect x="261" y="240" width="2" height="1.5" fill="#D5DFF2" opacity="0.8"/>
<rect x="256" y="248" width="2" height="1.5" fill="#D5DFF2" opacity="0.8"/>
<rect x="256" y="252" width="2" height="1.5" fill="#D5DFF2" opacity="0.8"/>
<rect x="261" y="248" width="2" height="1.5" fill="#D5DFF2" opacity="0.8"/>
<rect x="261" y="252" width="2" height="1.5" fill="#D5DFF2" opacity="0.8"/>
<rect x="256" y="260" width="2" height="1.5" fill="#D5DFF2" opacity="0.8"/>
<rect x="256" y="264" width="2" height="1.5" fill="#D5DFF2" opacity="0.8"/>
<rect x="261" y="260" width="2" height="1.5" fill="#D5DFF2" opacity="0.8"/>
<rect x="261" y="264" width="2" height="1.5" fill="#D5DFF2" opacity="0.8"/>
<rect x="256" y="271" width="2" height="1.5" fill="#D5DFF2" opacity="0.8"/>
<rect x="256" y="275" width="2" height="1.5" fill="#D5DFF2" opacity="0.8"/>
<rect x="261" y="271" width="2" height="1.5" fill="#D5DFF2" opacity="0.8"/>
<rect x="261" y="275" width="2" height="1.5" fill="#D5DFF2" opacity="0.8"/>
<rect x="256" y="283" width="2" height="1.5" fill="#D5DFF2" opacity="0.8"/>
<rect x="256" y="287" width="2" height="1.5" fill="#D5DFF2" opacity="0.8"/>
<rect x="261" y="283" width="2" height="1.5" fill="#D5DFF2" opacity="0.8"/>
<rect x="261" y="287" width="2" height="1.5" fill="#D5DFF2" opacity="0.8"/>
<rect x="256" y="295" width="2" height="1.5" fill="#D5DFF2" opacity="0.8"/>
<rect x="256" y="299" width="2" height="1.5" fill="#D5DFF2" opacity="0.8"/>
<rect x="261" y="295" width="2" height="1.5" fill="#D5DFF2" opacity="0.8"/>
<rect x="261" y="299" width="2" height="1.5" fill="#D5DFF2" opacity="0.8"/>
<rect x="256" y="307" width="2" height="1.5" fill="#D5DFF2" opacity="0.8"/>
<rect x="256" y="311" width="2" height="1.5" fill="#D5DFF2" opacity="0.8"/>
<rect x="261" y="307" width="2" height="1.5" fill="#D5DFF2" opacity="0.8"/>
<rect x="261" y="311" width="2" height="1.5" fill="#D5DFF2" opacity="0.8"/>
<rect x="256" y="331" width="2" height="1.5" fill="#D5DFF2" opacity="0.8"/>
<rect x="256" y="335" width="2" height="1.5" fill="#D5DFF2" opacity="0.8"/>
<rect x="261" y="331" width="2" height="1.5" fill="#D5DFF2" opacity="0.8"/>
<rect x="261" y="335" width="2" height="1.5" fill="#D5DFF2" opacity="0.8"/>
<rect x="256" y="342" width="2" height="1.5" fill="#D5DFF2" opacity="0.8"/>
<rect x="256" y="346" width="2" height="1.5" fill="#D5DFF2" opacity="0.8"/>
<rect x="261" y="342" width="2" height="1.5" fill="#D5DFF2" opacity="0.8"/>
<rect x="261" y="346" width="2" height="1.5" fill="#D5DFF2" opacity="0.8"/>
<rect x="256" y="354" width="2" height="1.5" fill="#D5DFF2" opacity="0.8"/>
<rect x="256" y="358" width="2" height="1.5" fill="#D5DFF2" opacity="0.8"/>
<rect x="261" y="354" width="2" height="1.5" fill="#D5DFF2" opacity="0.8"/>
<rect x="261" y="358" width="2" height="1.5" fill="#D5DFF2" opacity="0.8"/>
<rect x="256" y="366" width="2" height="1.5" fill="#D5DFF2" opacity="0.8"/>
<rect x="256" y="370" width="2" height="1.5" fill="#D5DFF2" opacity="0.8"/>
<rect x="261" y="366" width="2" height="1.5" fill="#D5DFF2" opacity="0.8"/>
<rect x="261" y="370" width="2" height="1.5" fill="#D5DFF2" opacity="0.8"/>
<rect x="256" y="378" width="2" height="1.5" fill="#D5DFF2" opacity="0.8"/>
<rect x="256" y="382" width="2" height="1.5" fill="#D5DFF2" opacity="0.8"/>
<rect x="261" y="378" width="2" height="1.5" fill="#D5DFF2" opacity="0.8"/>
<rect x="261" y="382" width="2" height="1.5" fill="#D5DFF2" opacity="0.8"/>
<rect x="256" y="390" width="2" height="1.5" fill="#D5DFF2" opacity="0.8"/>
<rect x="256" y="394" width="2" height="1.5" fill="#D5DFF2" opacity="0.8"/>
<rect x="261" y="390" width="2" height="1.5" fill="#D5DFF2" opacity="0.8"/>
<rect x="261" y="394" width="2" height="1.5" fill="#D5DFF2" opacity="0.8"/>
<rect x="256" y="402" width="2" height="1.5" fill="#D5DFF2" opacity="0.8"/>
<rect x="256" y="406" width="2" height="1.5" fill="#D5DFF2" opacity="0.8"/>
<rect x="261" y="402" width="2" height="1.5" fill="#D5DFF2" opacity="0.8"/>
<rect x="261" y="406" width="2" height="1.5" fill="#D5DFF2" opacity="0.8"/>
<rect x="256" y="413" width="2" height="1.5" fill="#D5DFF2" opacity="0.8"/>
<rect x="256" y="417" width="2" height="1.5" fill="#D5DFF2" opacity="0.8"/>
<rect x="261" y="413" width="2" height="1.5" fill="#D5DFF2" opacity="0.8"/>
<rect x="261" y="417" width="2" height="1.5" fill="#D5DFF2" opacity="0.8"/>
<rect x="256" y="437" width="2" height="1.5" fill="#D5DFF2" opacity="0.8"/>
<rect x="256" y="441" width="2" height="1.5" fill="#D5DFF2" opacity="0.8"/>
<rect x="261" y="437" width="2" height="1.5" fill="#D5DFF2" opacity="0.8"/>
<rect x="261" y="441" width="2" height="1.5" fill="#D5DFF2" opacity="0.8"/>
<rect x="256" y="461" width="2" height="1.5" fill="#D5DFF2" opacity="0.8"/>
<rect x="256" y="465" width="2" height="1.5" fill="#D5DFF2" opacity="0.8"/>
<rect x="261" y="461" width="2" height="1.5" fill="#D5DFF2" opacity="0.8"/>
<rect x="261" y="465" width="2" height="1.5" fill="#D5DFF2" opacity="0.8"/>
<rect x="256" y="485" width="2" height="1.5" fill="#D5DFF2" opacity="0.8"/>
<rect x="256" y="489" width="2" height="1.5" fill="#D5DFF2" opacity="0.8"/>
<rect x="261" y="485" width="2" height="1.5" fill="#D5DFF2" opacity="0.8"/>
<rect x="261" y="489" width="2" height="1.5" fill="#D5DFF2" opacity="0.8"/>
<rect x="256" y="496" width="2" height="1.5" fill="#D5DFF2" opacity="0.8"/>
<rect x="256" y="500" width="2" height="1.5" fill="#D5DFF2" opacity="0.8"/>
<rect x="261" y="496" width="2" height="1.5" fill="#D5DFF2" opacity="0.8"/>
<rect x="261" y="500" width="2" height="1.5" fill="#D5DFF2" opacity="0.8"/>
<rect x="589" y="117" width="2" height="1.5" fill="#D5DFF2" opacity="0.8"/>
<rect x="589" y="121" width="2" height="1.5" fill="#D5DFF2" opacity="0.8"/>
<rect x="594" y="117" width="2" height="1.5" fill="#D5DFF2" opacity="0.8"/>
<rect x="594" y="121" width="2" height="1.5" fill="#D5DFF2" opacity="0.8"/>
<rect x="660" y="117" width="2" height="1.5" fill="#D5DFF2" opacity="0.8"/>
<rect x="660" y="121" width="2" height="1.5" fill="#D5DFF2" opacity="0.8"/>
<rect x="665" y="117" width="2" height="1.5" fill="#D5DFF2" opacity="0.8"/>
<rect x="665" y="121" width="2" height="1.5" fill="#D5DFF2" opacity="0.8"/>
<rect x="589" y="129" width="2" height="1.5" fill="#D5DFF2" opacity="0.8"/>
<rect x="589" y="133" width="2" height="1.5" fill="#D5DFF2" opacity="0.8"/>
<rect x="594" y="129" width="2" height="1.5" fill="#D5DFF2" opacity="0.8"/>
<rect x="594" y="133" width="2" height="1.5" fill="#D5DFF2" opacity="0.8"/>
<rect x="660" y="129" width="2" height="1.5" fill="#D5DFF2" opacity="0.8"/>
<rect x="660" y="133" width="2" height="1.5" fill="#D5DFF2" opacity="0.8"/>
<rect x="665" y="129" width="2" height="1.5" fill="#D5DFF2" opacity="0.8"/>
<rect x="665" y="133" width="2" height="1.5" fill="#D5DFF2" opacity="0.8"/>
<rect x="589" y="141" width="2" height="1.5" fill="#D5DFF2" opacity="0.8"/>
<rect x="589" y="145" width="2" height="1.5" fill="#D5DFF2" opacity="0.8"/>
<rect x="594" y="141" width="2" height="1.5" fill="#D5DFF2" opacity="0.8"/>
<rect x="594" y="145" width="2" height="1.5" fill="#D5DFF2" opacity="0.8"/>
<rect x="660" y="141" width="2" height="1.5" fill="#D5DFF2" opacity="0.8"/>
<rect x="660" y="145" width="2" height="1.5" fill="#D5DFF2" opacity="0.8"/>
<rect x="665" y="141" width="2" height="1.5" fill="#D5DFF2" opacity="0.8"/>
<rect x="665" y="145" width="2" height="1.5" fill="#D5DFF2" opacity="0.8"/>
<rect x="589" y="153" width="2" height="1.5" fill="#D5DFF2" opacity="0.8"/>
<rect x="589" y="157" width="2" height="1.5" fill="#D5DFF2" opacity="0.8"/>
<rect x="594" y="153" width="2" height="1.5" fill="#D5DFF2" opacity="0.8"/>
<rect x="594" y="157" width="2" height="1.5" fill="#D5DFF2" opacity="0.8"/>
<rect x="660" y="153" width="2" height="1.5" fill="#D5DFF2" opacity="0.8"/>
<rect x="660" y="157" width="2" height="1.5" fill="#D5DFF2" opacity="0.8"/>
<rect x="665" y="153" width="2" height="1.5" fill="#D5DFF2" opacity="0.8"/>
<rect x="665" y="157" width="2" height="1.5" fill="#D5DFF2" opacity="0.8"/>
<rect x="340" y="142" width="2" height="1.5" fill="#D5DFF2" opacity="0.8"/>
<rect x="340" y="146" width="2" height="1.5" fill="#D5DFF2" opacity="0.8"/>
<rect x="345" y="142" width="2" height="1.5" fill="#D5DFF2" opacity="0.8"/>
<rect x="345" y="146" width="2" height="1.5" fill="#D5DFF2" opacity="0.8"/>
<rect x="340" y="189" width="2" height="1.5" fill="#D5DFF2" opacity="0.8"/>
<rect x="340" y="193" width="2" height="1.5" fill="#D5DFF2" opacity="0.8"/>
<rect x="345" y="189" width="2" height="1.5" fill="#D5DFF2" opacity="0.8"/>
<rect x="345" y="193" width="2" height="1.5" fill="#D5DFF2" opacity="0.8"/>
<rect x="352" y="224" width="2" height="1.5" fill="#D5DFF2" opacity="0.8"/>
<rect x="352" y="228" width="2" height="1.5" fill="#D5DFF2" opacity="0.8"/>
<rect x="357" y="224" width="2" height="1.5" fill="#D5DFF2" opacity="0.8"/>
<rect x="357" y="228" width="2" height="1.5" fill="#D5DFF2" opacity="0.8"/>
<rect x="410" y="224" width="2" height="1.5" fill="#D5DFF2" opacity="0.8"/>
<rect x="410" y="228" width="2" height="1.5" fill="#D5DFF2" opacity="0.8"/>
<rect x="415" y="224" width="2" height="1.5" fill="#D5DFF2" opacity="0.8"/>
<rect x="415" y="228" width="2" height="1.5" fill="#D5DFF2" opacity="0.8"/>
<rect x="494" y="70" width="2" height="1.5" fill="#D5DFF2" opacity="0.8"/>
<rect x="494" y="74" width="2" height="1.5" fill="#D5DFF2" opacity="0.8"/>
<rect x="499" y="70" width="2" height="1.5" fill="#D5DFF2" opacity="0.8"/>
<rect x="499" y="74" width="2" height="1.5" fill="#D5DFF2" opacity="0.8"/>
<rect x="541" y="70" width="2" height="1.5" fill="#D5DFF2" opacity="0.8"/>
<rect x="541" y="74" width="2" height="1.5" fill="#D5DFF2" opacity="0.8"/>
<rect x="546" y="70" width="2" height="1.5" fill="#D5DFF2" opacity="0.8"/>
<rect x="546" y="74" width="2" height="1.5" fill="#D5DFF2" opacity="0.8"/>
<rect x="612" y="70" width="2" height="1.5" fill="#D5DFF2" opacity="0.8"/>
<rect x="612" y="74" width="2" height="1.5" fill="#D5DFF2" opacity="0.8"/>
<rect x="617" y="70" width="2" height="1.5" fill="#D5DFF2" opacity="0.8"/>
<rect x="617" y="74" width="2" height="1.5" fill="#D5DFF2" opacity="0.8"/>
<rect x="660" y="70" width="2" height="1.5" fill="#D5DFF2" opacity="0.8"/>
<rect x="660" y="74" width="2" height="1.5" fill="#D5DFF2" opacity="0.8"/>
<rect x="665" y="70" width="2" height="1.5" fill="#D5DFF2" opacity="0.8"/>
<rect x="665" y="74" width="2" height="1.5" fill="#D5DFF2" opacity="0.8"/>
<rect x="695" y="153" width="2" height="1.5" fill="#D5DFF2" opacity="0.8"/>
<rect x="695" y="157" width="2" height="1.5" fill="#D5DFF2" opacity="0.8"/>
<rect x="700" y="153" width="2" height="1.5" fill="#D5DFF2" opacity="0.8"/>
<rect x="700" y="157" width="2" height="1.5" fill="#D5DFF2" opacity="0.8"/>
<rect x="695" y="199" width="2" height="1.5" fill="#D5DFF2" opacity="0.8"/>
<rect x="695" y="203" width="2" height="1.5" fill="#D5DFF2" opacity="0.8"/>
<rect x="700" y="199" width="2" height="1.5" fill="#D5DFF2" opacity="0.8"/>
<rect x="700" y="203" width="2" height="1.5" fill="#D5DFF2" opacity="0.8"/>
<rect x="494" y="142" width="2" height="1.5" fill="#D5DFF2" opacity="0.8"/>
<rect x="494" y="146" width="2" height="1.5" fill="#D5DFF2" opacity="0.8"/>
<rect x="499" y="142" width="2" height="1.5" fill="#D5DFF2" opacity="0.8"/>
<rect x="499" y="146" width="2" height="1.5" fill="#D5DFF2" opacity="0.8"/>
<rect x="494" y="189" width="2" height="1.5" fill="#D5DFF2" opacity="0.8"/>
<rect x="494" y="193" width="2" height="1.5" fill="#D5DFF2" opacity="0.8"/>
<rect x="499" y="189" width="2" height="1.5" fill="#D5DFF2" opacity="0.8"/>
<rect x="499" y="193" width="2" height="1.5" fill="#D5DFF2" opacity="0.8"/>
<rect x="529" y="165" width="2" height="1.5" fill="#D5DFF2" opacity="0.8"/>
<rect x="529" y="169" width="2" height="1.5" fill="#D5DFF2" opacity="0.8"/>
<rect x="534" y="165" width="2" height="1.5" fill="#D5DFF2" opacity="0.8"/>
<rect x="534" y="169" width="2" height="1.5" fill="#D5DFF2" opacity="0.8"/>
<rect x="529" y="211" width="2" height="1.5" fill="#D5DFF2" opacity="0.8"/>
<rect x="529" y="215" width="2" height="1.5" fill="#D5DFF2" opacity="0.8"/>
<rect x="534" y="211" width="2" height="1.5" fill="#D5DFF2" opacity="0.8"/>
<rect x="534" y="215" width="2" height="1.5" fill="#D5DFF2" opacity="0.8"/>
<rect x="459" y="295" width="2" height="1.5" fill="#D5DFF2" opacity="0.8"/>
<rect x="459" y="299" width="2" height="1.5" fill="#D5DFF2" opacity="0.8"/>
<rect x="464" y="295" width="2" height="1.5" fill="#D5DFF2" opacity="0.8"/>
<rect x="464" y="299" width="2" height="1.5" fill="#D5DFF2" opacity="0.8"/>
<rect x="494" y="295" width="2" height="1.5" fill="#D5DFF2" opacity="0.8"/>
<rect x="494" y="299" width="2" height="1.5" fill="#D5DFF2" opacity="0.8"/>
<rect x="499" y="295" width="2" height="1.5" fill="#D5DFF2" opacity="0.8"/>
<rect x="499" y="299" width="2" height="1.5" fill="#D5DFF2" opacity="0.8"/>
<rect x="459" y="354" width="2" height="1.5" fill="#D5DFF2" opacity="0.8"/>
<rect x="459" y="358" width="2" height="1.5" fill="#D5DFF2" opacity="0.8"/>
<rect x="464" y="354" width="2" height="1.5" fill="#D5DFF2" opacity="0.8"/>
<rect x="464" y="358" width="2" height="1.5" fill="#D5DFF2" opacity="0.8"/>
<rect x="494" y="354" width="2" height="1.5" fill="#D5DFF2" opacity="0.8"/>
<rect x="494" y="358" width="2" height="1.5" fill="#D5DFF2" opacity="0.8"/>
<rect x="499" y="354" width="2" height="1.5" fill="#D5DFF2" opacity="0.8"/>
<rect x="499" y="358" width="2" height="1.5" fill="#D5DFF2" opacity="0.8"/>
<rect x="517" y="295" width="2" height="1.5" fill="#D5DFF2" opacity="0.8"/>
<rect x="517" y="299" width="2" height="1.5" fill="#D5DFF2" opacity="0.8"/>
<rect x="522" y="295" width="2" height="1.5" fill="#D5DFF2" opacity="0.8"/>
<rect x="522" y="299" width="2" height="1.5" fill="#D5DFF2" opacity="0.8"/>
<rect x="517" y="354" width="2" height="1.5" fill="#D5DFF2" opacity="0.8"/>
<rect x="517" y="358" width="2" height="1.5" fill="#D5DFF2" opacity="0.8"/>
<rect x="522" y="354" width="2" height="1.5" fill="#D5DFF2" opacity="0.8"/>
<rect x="522" y="358" width="2" height="1.5" fill="#D5DFF2" opacity="0.8"/>
<rect x="565" y="378" width="2" height="1.5" fill="#D5DFF2" opacity="0.8"/>
<rect x="565" y="382" width="2" height="1.5" fill="#D5DFF2" opacity="0.8"/>
<rect x="570" y="378" width="2" height="1.5" fill="#D5DFF2" opacity="0.8"/>
<rect x="570" y="382" width="2" height="1.5" fill="#D5DFF2" opacity="0.8"/>
<rect x="565" y="390" width="2" height="1.5" fill="#D5DFF2" opacity="0.8"/>
<rect x="565" y="394" width="2" height="1.5" fill="#D5DFF2" opacity="0.8"/>
<rect x="570" y="390" width="2" height="1.5" fill="#D5DFF2" opacity="0.8"/>
<rect x="570" y="394" width="2" height="1.5" fill="#D5DFF2" opacity="0.8"/>
<rect x="565" y="402" width="2" height="1.5" fill="#D5DFF2" opacity="0.8"/>
<rect x="565" y="406" width="2" height="1.5" fill="#D5DFF2" opacity="0.8"/>
<rect x="570" y="402" width="2" height="1.5" fill="#D5DFF2" opacity="0.8"/>
<rect x="570" y="406" width="2" height="1.5" fill="#D5DFF2" opacity="0.8"/>
<g opacity="0.07">
<rect x="47" y="15" width="1" height="539" fill="#29513E"/>
<rect x="71" y="15" width="1" height="539" fill="#29513E"/>
<rect x="94" y="15" width="1" height="539" fill="#29513E"/>
<rect x="118" y="15" width="1" height="539" fill="#29513E"/>
<rect x="142" y="15" width="1" height="539" fill="#29513E"/>
<rect x="165" y="15" width="1" height="539" fill="#29513E"/>
<rect x="189" y="15" width="1" height="539" fill="#29513E"/>
<rect x="213" y="15" width="1" height="539" fill="#29513E"/>
<rect x="236" y="15" width="1" height="539" fill="#29513E"/>
<rect x="260" y="15" width="1" height="539" fill="#29513E"/>
<rect x="284" y="15" width="1" height="539" fill="#29513E"/>
<rect x="307" y="15" width="1" height="539" fill="#29513E"/>
<rect x="331" y="15" width="1" height="539" fill="#29513E"/>
<rect x="355" y="15" width="1" height="539" fill="#29513E"/>
<rect x="378" y="15" width="1" height="539" fill="#29513E"/>
<rect x="402" y="15" width="1" height="539" fill="#29513E"/>
<rect x="426" y="15" width="1" height="539" fill="#29513E"/>
<rect x="449" y="15" width="1" height="539" fill="#29513E"/>
<rect x="473" y="15" width="1" height="539" fill="#29513E"/>
<rect x="497" y="15" width="1" height="539" fill="#29513E"/>
<rect x="520" y="15" width="1" height="539" fill="#29513E"/>
<rect x="544" y="15" width="1" height="539" fill="#29513E"/>
<rect x="568" y="15" width="1" height="539" fill="#29513E"/>
<rect x="592" y="15" width="1" height="539" fill="#29513E"/>
<rect x="615" y="15" width="1" height="539" fill="#29513E"/>
<rect x="639" y="15" width="1" height="539" fill="#29513E"/>
<rect x="663" y="15" width="1" height="539" fill="#29513E"/>
<rect x="686" y="15" width="1" height="539" fill="#29513E"/>
<rect x="710" y="15" width="1" height="539" fill="#29513E"/>
<rect x="734" y="15" width="1" height="539" fill="#29513E"/>
<rect x="757" y="15" width="1" height="539" fill="#29513E"/>
<rect x="781" y="15" width="1" height="539" fill="#29513E"/>
<rect x="25" y="37" width="777" height="1" fill="#29513E"/>
<rect x="25" y="60" width="777" height="1" fill="#29513E"/>
<rect x="25" y="84" width="777" height="1" fill="#29513E"/>
<rect x="25" y="108" width="777" height="1" fill="#29513E"/>
<rect x="25" y="131" width="777" height="1" fill="#29513E"/>
<rect x="25" y="155" width="777" height="1" fill="#29513E"/>
<rect x="25" y="179" width="777" height="1" fill="#29513E"/>
<rect x="25" y="202" width="777" height="1" fill="#29513E"/>
<rect x="25" y="226" width="777" height="1" fill="#29513E"/>
<rect x="25" y="250" width="777" height="1" fill="#29513E"/>
<rect x="25" y="274" width="777" height="1" fill="#29513E"/>
<rect x="25" y="297" width="777" height="1" fill="#29513E"/>
<rect x="25" y="321" width="777" height="1" fill="#29513E"/>
<rect x="25" y="345" width="777" height="1" fill="#29513E"/>
<rect x="25" y="368" width="777" height="1" fill="#29513E"/>
<rect x="25" y="392" width="777" height="1" fill="#29513E"/>
<rect x="25" y="416" width="777" height="1" fill="#29513E"/>
<rect x="25" y="439" width="777" height="1" fill="#29513E"/>
<rect x="25" y="463" width="777" height="1" fill="#29513E"/>
<rect x="25" y="487" width="777" height="1" fill="#29513E"/>
<rect x="25" y="511" width="777" height="1" fill="#29513E"/>
<rect x="25" y="534" width="777" height="1" fill="#29513E"/>
</g>
</svg></body></html>
